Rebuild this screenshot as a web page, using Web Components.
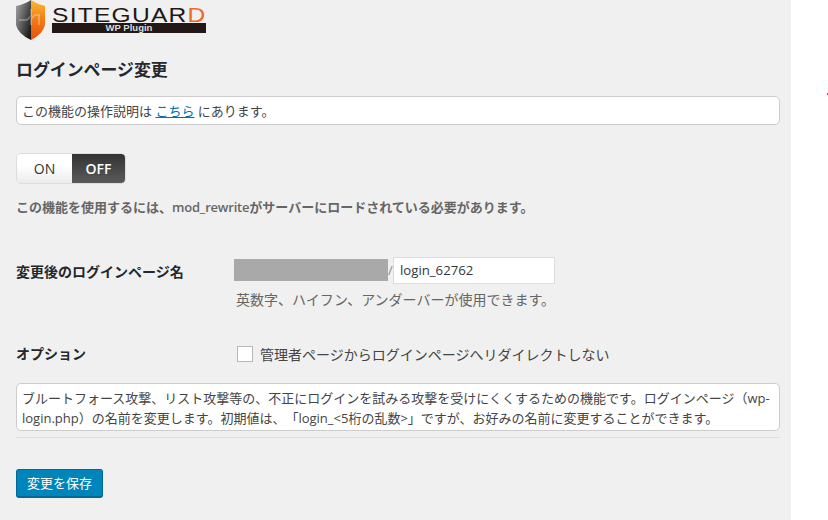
<!DOCTYPE html>
<html lang="ja">
<head>
<meta charset="utf-8">
<title>SiteGuard</title>
<style>
  html, body { margin: 0; height: 100%; background: #fff; }
  body {
    font-family: "Open Sans", "Noto Sans CJK JP", sans-serif;
    font-size: 13px;
    color: #444;
    overflow: hidden;
    text-spacing-trim: space-all;
  }
</style>
</head>
<body>
<sg-page>
  <sg-logo></sg-logo>
  <sg-title>ログインページ変更</sg-title>
  <sg-notice style="margin-top: 15px; --notice-top: 5px; --notice-bottom: 3px">この機能の操作説明は <a href="#">こちら</a> にあります。</sg-notice>
  <sg-toggle></sg-toggle>
  <sg-warning>この機能を使用するには、<span>mod_rewrite</span>がサーバーにロードされている必要があります。</sg-warning>
  <sg-field label="変更後のログインページ名" style="margin-top: 39px; --label-line: 32px">
    <sg-path value="login_62762"></sg-path>
    <sg-hint>英数字、ハイフン、アンダーバーが使用できます。</sg-hint>
  </sg-field>
  <sg-field label="オプション" style="margin-top: 31px">
    <sg-check>管理者ページからログインページへリダイレクトしない</sg-check>
  </sg-field>
  <sg-notice style="margin-top: 15px; --notice-top: 4px; --notice-bottom: 2px; --notice-line: 20px">ブルートフォース攻撃、リスト攻撃等の、不正にログインを試みる攻撃を受けにくくするための機能です。ログインページ（wp-login.php）の名前を変更します。初期値は、「login_&lt;5桁の乱数&gt;」ですが、お好みの名前に変更することができます。</sg-notice>
  <sg-rule></sg-rule>
  <sg-button>変更を保存</sg-button>
</sg-page>

<script>
  function define(name, html) {
    customElements.define(name, class extends HTMLElement {
      constructor() {
        super();
        this.attachShadow({ mode: 'open' }).innerHTML = html(this);
      }
    });
  }

  define('sg-page', () => `
    <style>
      :host { display: block; width: 791px; height: 520px; box-sizing: border-box; padding: 0 11px 0 16px; background: #f0f0f0; position: relative; }
      .dot { position: absolute; left: 827px; top: 93px; width: 1px; height: 2px; background: #e33; }
    </style>
    <slot></slot>
    <div class="dot"></div>
  `);

  define('sg-logo', () => `
    <style>
      :host { display: flex; align-items: flex-start; height: 40px; gap: 7px; }
      svg { display: block; flex: none; }
      .word { width: 154px; padding-top: 4px; }
      .name {
        font: 400 20px/22px "Liberation Sans", sans-serif;
        color: #231815;
        letter-spacing: 1px;
        white-space: nowrap;
        height: 19px;
        transform: scaleX(1.23);
        transform-origin: left center;
      }
      .name span { color: #ee6a1f; }
      .bar {
        background: #231815;
        color: #ddd;
        height: 10px;
        font: 700 9.5px/10px "Liberation Sans", sans-serif;
        text-align: center;
      }
    </style>
    <svg width="29" height="40" viewBox="0 0 29 40">
      <defs>
        <linearGradient id="l" x1="0" y1="0" x2="1" y2="0.7"><stop offset="0" stop-color="#a8a8a8"/><stop offset="0.55" stop-color="#5c5c5c"/><stop offset="1" stop-color="#1d1d1d"/></linearGradient>
        <linearGradient id="r" x1="0" y1="0" x2="0" y2="1"><stop offset="0" stop-color="#f9bc30"/><stop offset="0.5" stop-color="#f37a16"/><stop offset="1" stop-color="#e8500a"/></linearGradient>
      </defs>
      <path d="M15 0 Q9 4 0 6 V25 Q2 34 15 40 Z" fill="url(#l)"/>
      <path d="M15 0 Q21 4 29 6 V25 Q27 34 15 40 Z" fill="url(#r)"/>
      <path d="M3 20 H11 L15 16 V9 M15 25 V19 L19 15 H23 V25" fill="none" stroke="#fff" stroke-opacity=".35" stroke-width="1.5"/>
    </svg>
    <div class="word">
      <div class="name">SITEGUAR<span>D</span></div>
      <div class="bar">WP Plugin</div>
    </div>
  `);

  define('sg-title', () => `
    <style>
      :host { display: block; margin-top: 19px; font-size: 16.9px; line-height: 22px; font-weight: 700; color: #23282d; }
    </style>
    <slot></slot>
  `);

  define('sg-notice', () => `
    <style>
      :host { display: block; box-sizing: border-box; background: #fff; border: 1px solid #ccc; border-radius: 5px; padding: var(--notice-top) 5px var(--notice-bottom); line-height: var(--notice-line, 19px); color: #444; }
      ::slotted(a) { color: #0073aa; }
    </style>
    <slot></slot>
  `);

  define('sg-toggle', () => `
    <style>
      :host { display: flex; width: 110px; height: 31px; margin-top: 28px; box-sizing: border-box; border: 1px solid #ddd; border-radius: 5px; overflow: hidden; font-size: 14px; }
      div { display: flex; align-items: center; justify-content: center; }
      .on { width: 55px; background: linear-gradient(#fff 40%, #ececec); color: #333; }
      .off { flex: 1; background: linear-gradient(#333, #5a5a5a); color: #fff; font-weight: 600; }
    </style>
    <div class="on">ON</div>
    <div class="off">OFF</div>
  `);

  define('sg-warning', () => `
    <style>
      :host { display: block; margin-top: 14px; line-height: 19px; font-weight: 600; color: #666; white-space: nowrap; }
      ::slotted(span) { letter-spacing: -0.2px; }
    </style>
    <slot></slot>
  `);

  define('sg-field', (el) => `
    <style>
      :host { display: grid; grid-template-columns: 218px 1fr; align-items: start; }
      .label { font-weight: 600; color: #23282d; font-size: 14px; line-height: var(--label-line, 28px); white-space: nowrap; }
    </style>
    <div class="label">${el.getAttribute('label')}</div>
    <div><slot></slot></div>
  `);

  define('sg-path', (el) => `
    <style>
      :host { display: flex; align-items: center; height: 28px; }
      .mask { width: 154px; height: 22px; background: #a9a9a9; }
      .slash { width: 5px; color: #888; line-height: 22px; }
      input { box-sizing: border-box; width: 162px; height: 27px; margin: 0; padding: 0 6px; border: 1px solid #ddd; background: #fff; font: 13.2px "Open Sans", sans-serif; color: #32373c; outline: 0; }
    </style>
    <div class="mask"></div><div class="slash">/</div>
    <input type="text" value="${el.getAttribute('value')}">
  `);

  define('sg-hint', () => `
    <style>
      :host { display: block; margin: 6px 0 0 2px; line-height: 19px; font-size: 14px; color: #666; white-space: nowrap; }
    </style>
    <slot></slot>
  `);

  define('sg-check', () => `
    <style>
      :host { display: flex; align-items: center; gap: 7px; height: 28px; margin-left: 3px; color: #444; white-space: nowrap; font-size: 14px; }
      i { display: block; box-sizing: border-box; width: 16px; height: 16px; background: #fff; border: 1px solid #b4b9be; }
    </style>
    <i></i><slot></slot>
  `);

  define('sg-rule', () => `
    <style>
      :host { display: block; height: 1px; margin-top: 6px; background: #ddd; }
    </style>
  `);

  define('sg-button', () => `
    <style>
      :host { display: block; width: fit-content; box-sizing: border-box; height: 29px; margin-top: 31px; padding: 0 10px; background: #0085ba; border: 1px solid #006799; border-bottom-width: 2px; border-radius: 3px; color: #fff; line-height: 26px; }
    </style>
    <slot></slot>
  `);
</script>
</body>
</html>
